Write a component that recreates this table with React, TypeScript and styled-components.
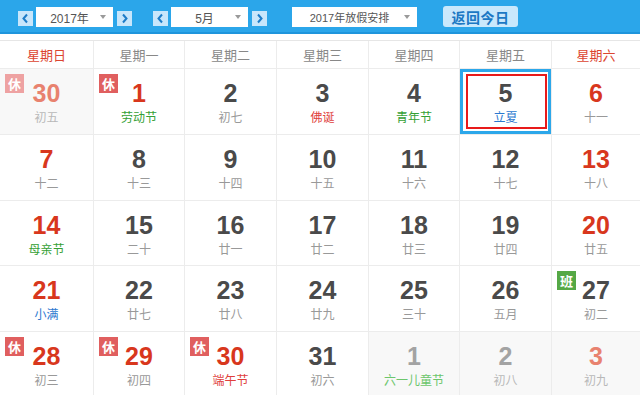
import React from "react";
import styled, { createGlobalStyle, css } from "styled-components";

const Global = createGlobalStyle`
  html, body { margin: 0; padding: 0; background: #fff; }
  body { font-family: "Liberation Sans", "Noto Sans CJK SC", sans-serif; }
  * { box-sizing: border-box; }
`;

const Page = styled.div`
  width: 640px;
  height: 395px;
  overflow: hidden;
  background: #fff;
`;

const TopBar = styled.div`
  height: 34px;
  background: #2ba6ea;
  border-bottom: 2px solid #1e95dc;
  display: flex;
  align-items: flex-start;
  padding-left: 18px;
`;

const ArrowBtn = styled.div`
  width: 15px;
  height: 15px;
  margin-top: 11px;
  background: #c8e6fb;
  display: flex;
  align-items: center;
  justify-content: center;
`;

const Select = styled.div<{ $w: number; $ml: number; $mr: number }>`
  width: ${(p) => p.$w}px;
  height: 20px;
  margin-top: 7px;
  margin-left: ${(p) => p.$ml}px;
  margin-right: ${(p) => p.$mr}px;
  background: #fff;
  display: flex;
  align-items: center;
  padding-left: 5px;
`;

const SelectLabel = styled.span<{ $size: number }>`
  flex: 1;
  text-align: center;
  font-size: ${(p) => p.$size}px;
  color: #555;
  white-space: nowrap;
`;

const Caret = styled.span`
  width: 0;
  height: 0;
  border-left: 3.5px solid transparent;
  border-right: 3.5px solid transparent;
  border-top: 4px solid #9a9a9a;
  margin-right: 7px;
  margin-left: 2px;
`;

const Spacer = styled.div<{ $w: number }>`
  width: ${(p) => p.$w}px;
  flex: none;
`;

const TodayButton = styled.div`
  margin-top: 6px;
  width: 75px;
  height: 21px;
  border-radius: 3px;
  background: #c9e8fc;
  color: #1c78c4;
  font-size: 14px;
  font-weight: bold;
  display: flex;
  align-items: center;
  justify-content: center;
  letter-spacing: 0.5px;
`;

const Grid = styled.div`
  margin-top: 6px;
  border-top: 1px solid #e6e6e6;
  display: grid;
  grid-template-columns: 93px 90px 91px 91px 90px 91px 1fr;
  grid-template-rows: 27px 65px 65px 64px 65px 65px;
  gap: 1px;
  background: #ececec;
`;

const HeadCell = styled.div<{ $red?: boolean }>`
  background: #fff;
  display: flex;
  align-items: center;
  justify-content: center;
  font-size: 13px;
  color: ${(p) => (p.$red ? "#dc4530" : "#888")};
`;

const Cell = styled.div<{ $other?: boolean; $today?: boolean }>`
  position: relative;
  background: ${(p) => (p.$other ? "#f8f8f8" : "#fff")};
  display: flex;
  flex-direction: column;
  align-items: center;
  padding-top: 10px;
  ${(p) =>
    p.$today &&
    css`
      box-shadow: inset 0 0 0 3px #2ca7ea;
      &::after {
        content: "";
        position: absolute;
        top: 5px;
        left: 6px;
        right: 4px;
        bottom: 5px;
        border: 2px solid #e81a1a;
      }
    `}
`;

const DayNum = styled.div<{ $color: string }>`
  height: 28px;
  line-height: 28px;
  font-size: 25px;
  font-weight: bold;
  color: ${(p) => p.$color};
`;

const Lunar = styled.div<{ $color: string }>`
  margin-top: 3px;
  height: 16px;
  line-height: 16px;
  font-size: 12px;
  color: ${(p) => p.$color};
  white-space: nowrap;
`;

const Badge = styled.div<{ $bg: string }>`
  position: absolute;
  top: 5px;
  left: 5px;
  width: 19px;
  height: 19px;
  background: ${(p) => p.$bg};
  color: #fff;
  font-size: 13px;
  font-weight: bold;
  display: flex;
  align-items: center;
  justify-content: center;
`;

type Kind = "normal" | "red" | "other" | "otherRed";
type DayData = {
  d: number;
  lunar: string;
  kind: Kind;
  lunarColor?: string;
  badge?: "休" | "休淡" | "班";
  today?: boolean;
};

const numColor: Record<Kind, string> = {
  normal: "#4a4a4a",
  red: "#d8371d",
  other: "#a3a3a3",
  otherRed: "#e8826f",
};

const GREEN = "#35a035";
const BLUE = "#2b78cf";
const RED = "#e0403c";

const days: DayData[] = [
  { d: 30, lunar: "初五", kind: "otherRed", badge: "休淡" },
  { d: 1, lunar: "劳动节", kind: "red", lunarColor: GREEN, badge: "休" },
  { d: 2, lunar: "初七", kind: "normal" },
  { d: 3, lunar: "佛诞", kind: "normal", lunarColor: RED },
  { d: 4, lunar: "青年节", kind: "normal", lunarColor: GREEN },
  { d: 5, lunar: "立夏", kind: "normal", lunarColor: BLUE, today: true },
  { d: 6, lunar: "十一", kind: "red" },
  { d: 7, lunar: "十二", kind: "red" },
  { d: 8, lunar: "十三", kind: "normal" },
  { d: 9, lunar: "十四", kind: "normal" },
  { d: 10, lunar: "十五", kind: "normal" },
  { d: 11, lunar: "十六", kind: "normal" },
  { d: 12, lunar: "十七", kind: "normal" },
  { d: 13, lunar: "十八", kind: "red" },
  { d: 14, lunar: "母亲节", kind: "red", lunarColor: GREEN },
  { d: 15, lunar: "二十", kind: "normal" },
  { d: 16, lunar: "廿一", kind: "normal" },
  { d: 17, lunar: "廿二", kind: "normal" },
  { d: 18, lunar: "廿三", kind: "normal" },
  { d: 19, lunar: "廿四", kind: "normal" },
  { d: 20, lunar: "廿五", kind: "red" },
  { d: 21, lunar: "小满", kind: "red", lunarColor: BLUE },
  { d: 22, lunar: "廿七", kind: "normal" },
  { d: 23, lunar: "廿八", kind: "normal" },
  { d: 24, lunar: "廿九", kind: "normal" },
  { d: 25, lunar: "三十", kind: "normal" },
  { d: 26, lunar: "五月", kind: "normal" },
  { d: 27, lunar: "初二", kind: "normal", badge: "班" },
  { d: 28, lunar: "初三", kind: "red", badge: "休" },
  { d: 29, lunar: "初四", kind: "red", badge: "休" },
  { d: 30, lunar: "端午节", kind: "red", lunarColor: RED, badge: "休" },
  { d: 31, lunar: "初六", kind: "normal" },
  { d: 1, lunar: "六一儿童节", kind: "other", lunarColor: "#6cc66c" },
  { d: 2, lunar: "初八", kind: "other" },
  { d: 3, lunar: "初九", kind: "otherRed" },
];

const weekNames = ["星期日", "星期一", "星期二", "星期三", "星期四", "星期五", "星期六"];

const Chevron = ({ dir }: { dir: "left" | "right" }) => (
  <svg width="9" height="11" viewBox="0 0 9 11">
    <polyline
      points={dir === "left" ? "6,1.5 2.5,5.5 6,9.5" : "3,1.5 6.5,5.5 3,9.5"}
      fill="none"
      stroke="#1d7cc8"
      strokeWidth="2"
    />
  </svg>
);

const badgeBg = (b: DayData["badge"]) =>
  b === "班" ? "#55a845" : b === "休淡" ? "#eea2a2" : "#e05f5f";

export default function App() {
  return (
    <Page>
      <Global />
      <TopBar>
        <ArrowBtn>
          <Chevron dir="left" />
        </ArrowBtn>
        <Select $w={77} $ml={3} $mr={4}>
          <SelectLabel $size={12}>2017年</SelectLabel>
          <Caret />
        </Select>
        <ArrowBtn>
          <Chevron dir="right" />
        </ArrowBtn>
        <Spacer $w={21} />
        <ArrowBtn>
          <Chevron dir="left" />
        </ArrowBtn>
        <Select $w={77} $ml={3} $mr={4}>
          <SelectLabel $size={12}>5月</SelectLabel>
          <Caret />
        </Select>
        <ArrowBtn>
          <Chevron dir="right" />
        </ArrowBtn>
        <Select $w={125} $ml={25} $mr={26}>
          <SelectLabel $size={11}>2017年放假安排</SelectLabel>
          <Caret />
        </Select>
        <TodayButton>返回今日</TodayButton>
      </TopBar>
      <Grid>
        {weekNames.map((w, i) => (
          <HeadCell key={w} $red={i === 0 || i === 6}>
            {w}
          </HeadCell>
        ))}
        {days.map((day, i) => {
          const other = day.kind === "other" || day.kind === "otherRed";
          return (
            <Cell key={i} $other={other} $today={day.today}>
              {day.badge && (
                <Badge $bg={badgeBg(day.badge)}>{day.badge === "班" ? "班" : "休"}</Badge>
              )}
              <DayNum $color={numColor[day.kind]}>{day.d}</DayNum>
              <Lunar $color={day.lunarColor ?? (other ? "#b8b8b8" : "#999")}>
                {day.lunar}
              </Lunar>
            </Cell>
          );
        })}
      </Grid>
    </Page>
  );
}
